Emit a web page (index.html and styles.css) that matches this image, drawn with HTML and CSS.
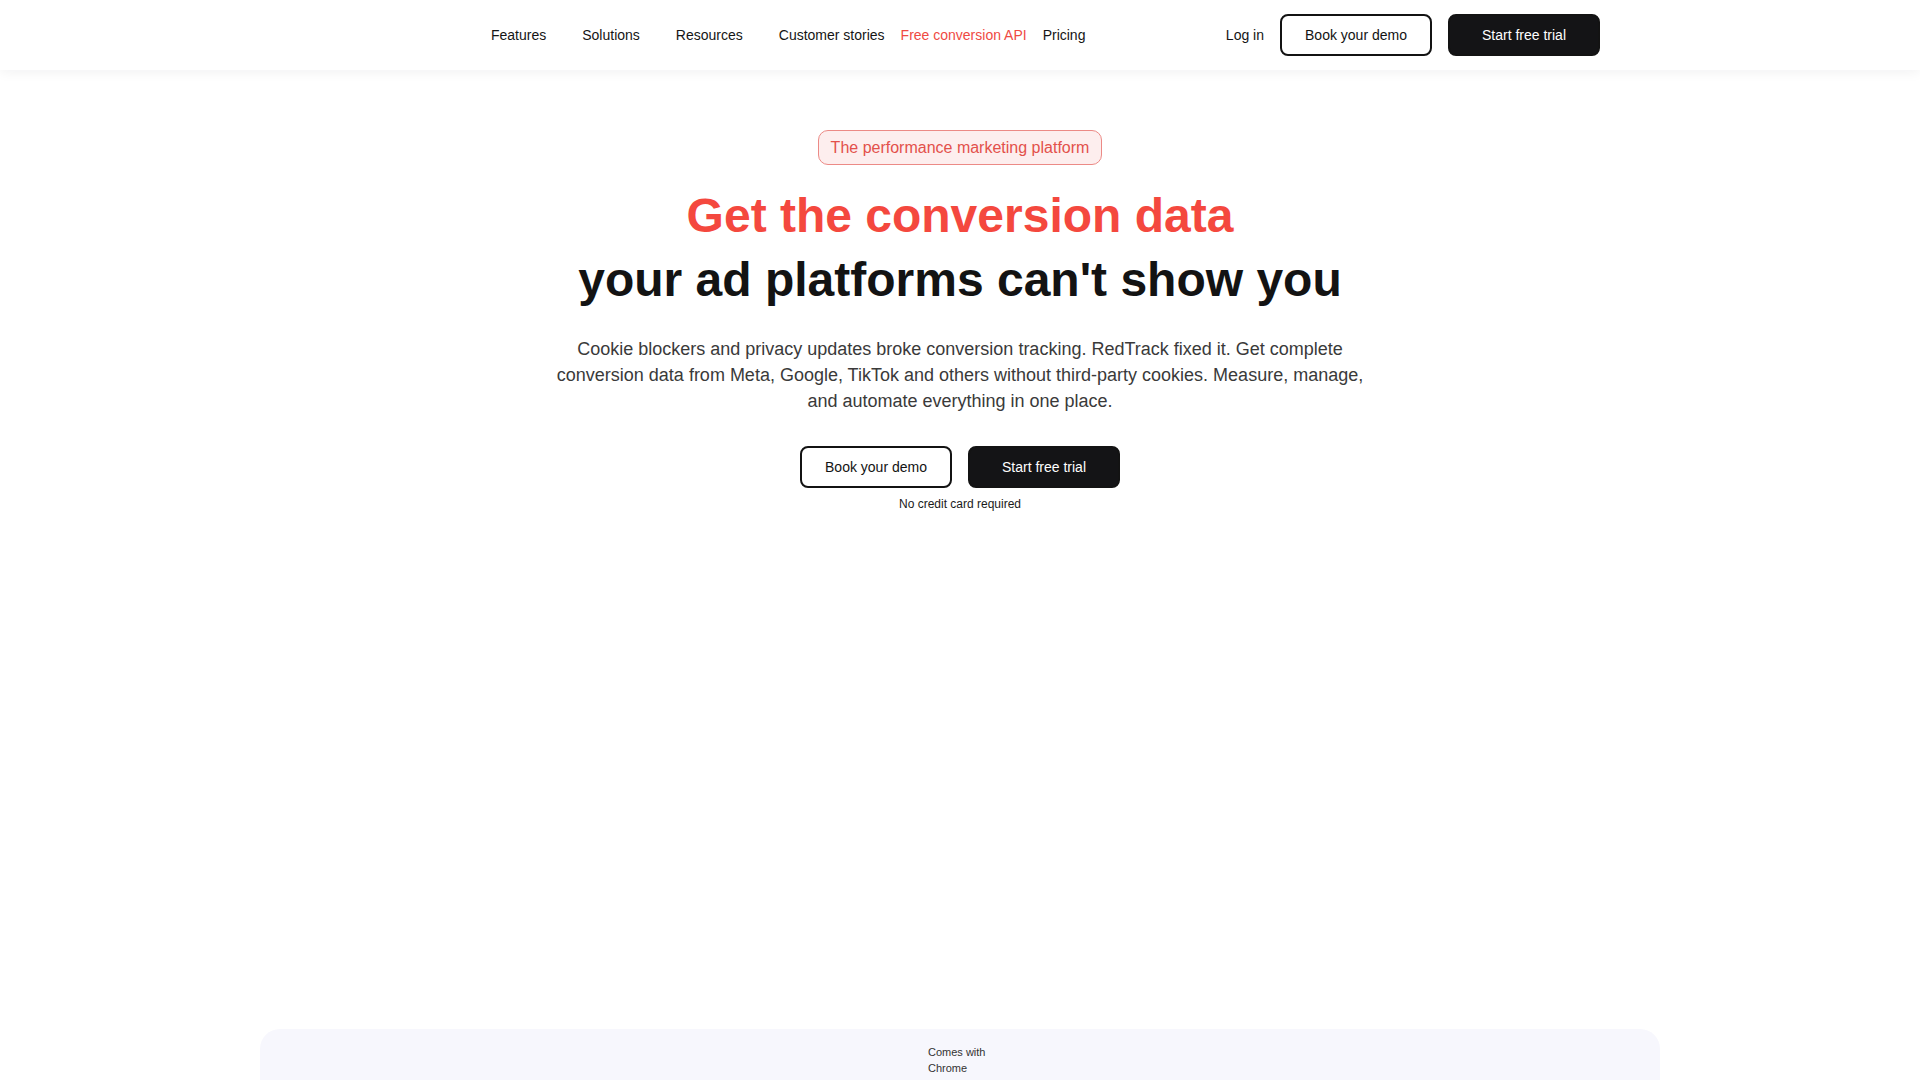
FILE: index.html
```html
<!DOCTYPE html>
<html lang="en">
<head>
<meta charset="utf-8">
<title>RedTrack — The performance marketing platform</title>
<link rel="stylesheet" href="styles.css">
</head>
<body>
<header class="nav">
  <div class="nav-inner">
    <div class="logo"></div>
    <nav class="menu">
      <a class="menu-item has-drop" href="#">Features</a>
      <a class="menu-item has-drop" href="#">Solutions</a>
      <a class="menu-item has-drop" href="#">Resources</a>
      <a class="menu-item" href="#">Customer stories</a>
      <a class="menu-item accent" href="#">Free conversion API</a>
      <a class="menu-item" href="#">Pricing</a>
    </nav>
    <div class="actions">
      <a class="login" href="#">Log in</a>
      <a class="btn btn-outline" href="#">Book your demo</a>
      <a class="btn btn-dark" href="#">Start free trial</a>
    </div>
  </div>
</header>

<main class="hero">
  <span class="badge">The performance marketing platform</span>
  <h1 class="title">
    <span class="title-red">Get the conversion data</span>
    <span class="title-dark">your ad platforms can't show you</span>
  </h1>
  <p class="lead">Cookie blockers and privacy updates broke conversion tracking. RedTrack fixed it. Get complete conversion data from Meta, Google, TikTok and others without third-party cookies. Measure, manage, and automate everything in one place.</p>
  <div class="cta">
    <a class="btn btn-outline" href="#">Book your demo</a>
    <a class="btn btn-dark" href="#">Start free trial</a>
  </div>
  <p class="note">No credit card required</p>
  <div class="media"></div>
</main>

<section class="panel">
  <div class="panel-text">Comes with<br>Chrome</div>
</section>
</body>
</html>
```

FILE: styles.css
```css
* { box-sizing: border-box; }

html, body {
  margin: 0;
  padding: 0;
}

body {
  font-family: "Liberation Sans", Arial, sans-serif;
  color: #111111;
  background: #ffffff;
  overflow: hidden;
}

a { text-decoration: none; color: inherit; }

.nav {
  height: 70px;
  background: #ffffff;
  box-shadow: 0 2px 12px rgba(20, 20, 40, 0.06);
  position: relative;
  z-index: 2;
}

.nav-inner {
  width: 1280px;
  height: 70px;
  margin: 0 auto;
  display: flex;
  align-items: center;
}

.logo {
  width: 171px;
  height: 30px;
}

.menu {
  display: flex;
  align-items: center;
  gap: 16px;
  font-size: 14px;
  color: #151515;
}

.menu-item { line-height: 20px; }

.has-drop { margin-right: 20px; }

.accent { color: #ef4a43; }

.actions {
  margin-left: auto;
  display: flex;
  align-items: center;
  gap: 16px;
}

.login {
  font-size: 14px;
  color: #151515;
  margin-right: 0;
}

.btn {
  display: inline-flex;
  align-items: center;
  justify-content: center;
  width: 152px;
  height: 42px;
  border-radius: 8px;
  font-size: 14px;
  border: 2px solid #131313;
}

.btn-outline {
  background: #ffffff;
  color: #131313;
}

.btn-dark {
  background: #141416;
  color: #ffffff;
}

.hero {
  display: flex;
  flex-direction: column;
  align-items: center;
  padding-top: 60px;
}

.badge {
  display: inline-block;
  font-size: 16px;
  line-height: 19px;
  padding: 7px 12px;
  color: #e3514b;
  background: #fdeeee;
  border: 1px solid #ec8a86;
  border-radius: 10px;
}

.title {
  margin: 19px 0 0;
  font-size: 48px;
  line-height: 64px;
  font-weight: 700;
  text-align: center;
  display: flex;
  flex-direction: column;
  align-items: center;
}

.title-red { color: #f4483e; }
.title-dark { color: #131313; }

.lead {
  margin: 24px 0 0;
  max-width: 820px;
  font-size: 18px;
  line-height: 26px;
  text-align: center;
  color: #3a3a3a;
}

.cta {
  display: flex;
  gap: 16px;
  margin-top: 32px;
}

.note {
  margin: 8px 0 0;
  font-size: 12px;
  line-height: 16px;
  color: #1a1a1a;
}

.media {
  height: 517px;
}

.panel {
  width: 1400px;
  height: 200px;
  margin: 0 auto;
  background: #f7f7fd;
  border-radius: 20px;
  padding-top: 15px;
  display: flex;
  justify-content: center;
}

.panel-text {
  width: 64px;
  font-size: 11px;
  line-height: 16px;
  color: #333333;
}
```
